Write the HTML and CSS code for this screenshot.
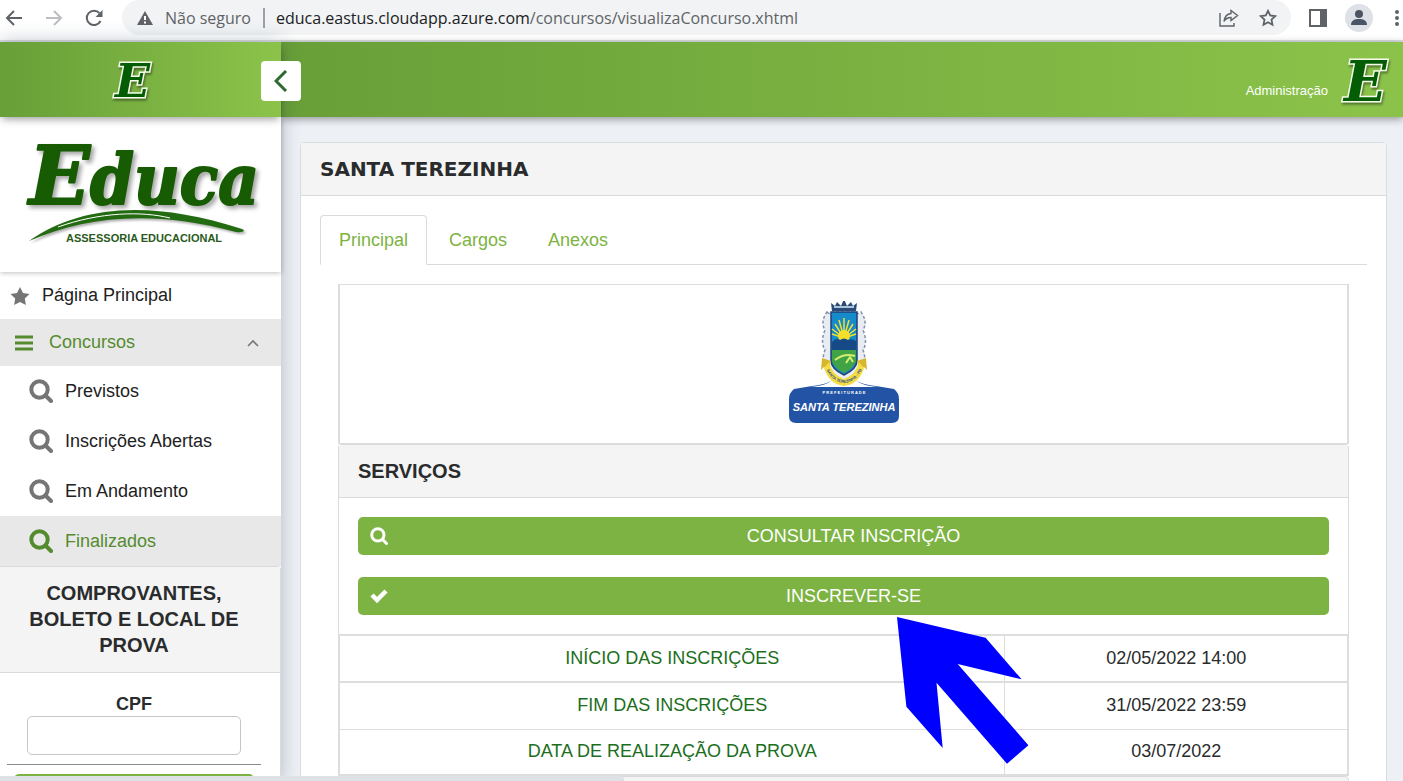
FILE: index.html
```html
<!DOCTYPE html>
<html lang="pt-BR">
<head>
  <meta charset="UTF-8">
  <meta name="viewport" content="width=device-width, initial-scale=1.0">
  <title>Educa - Concursos</title>
  <link rel="stylesheet" href="styles.css">
</head>
<body>
  <svg class="defs" aria-hidden="true">
    <symbol id="search" viewBox="0 0 24 24">
      <circle cx="10.5" cy="10.5" r="8.2" fill="none" stroke="currentColor" stroke-width="4"/>
      <path d="M16.5 16.5L22 22" stroke="currentColor" stroke-width="4" stroke-linecap="round"/>
    </symbol>
  </svg>

  <!-- browser bar -->
  <div class="browser">
    <button class="nav-btn" aria-label="Voltar">
      <svg width="18" height="18" viewBox="0 0 18 18" fill="none" stroke="#5f6368" stroke-width="2"><path d="M17 9H2M9 2L2 9l7 7"/></svg>
    </button>
    <button class="nav-btn" aria-label="Avançar">
      <svg width="18" height="18" viewBox="0 0 18 18" fill="none" stroke="#bcbec1" stroke-width="2"><path d="M1 9h15M9 2l7 7-7 7"/></svg>
    </button>
    <button class="nav-btn" aria-label="Recarregar">
      <svg width="18" height="18" viewBox="0 0 18 18" fill="none"><path d="M15.5 12A7.2 7.2 0 1 1 14.5 4.2" stroke="#5f6368" stroke-width="2"/><path d="M17.5 1v7h-7z" fill="#5f6368"/></svg>
    </button>
    <div class="address">
      <svg width="16" height="14" viewBox="0 0 16 14"><path d="M8 0l8 14H0z" fill="#5f6368"/><path d="M8 5v4M8 10.5v2" stroke="#fff" stroke-width="2"/></svg>
      <span class="insecure">Não seguro</span>
      <span class="url">educa.eastus.cloudapp.azure.com<span class="path">/concursos/visualizaConcurso.xhtml</span></span>
      <button class="nav-btn" aria-label="Compartilhar">
        <svg width="20" height="18" viewBox="0 0 20 18" fill="none" stroke="#5f6368" stroke-width="1.4"><path d="M1 4v13h14v-3"/><path d="M12 1.5l6.5 5L12 11.500V8.500C8.500 8.500 6.500 9.500 5 12.500 5.500 8 8 5 12 4.500z"/></svg>
      </button>
      <button class="nav-btn" aria-label="Favoritos">
        <svg width="18" height="18" viewBox="0 0 18 18" fill="none" stroke="#5f6368" stroke-width="1.800"><path d="M9 1.800l2.200 4.700 5.100.6-3.800 3.500 1 5.100L9 13.200l-4.500 2.500 1-5.100L1.700 7.100l5.100-.6z"/></svg>
      </button>
    </div>
    <button class="nav-btn" aria-label="Painel lateral">
      <svg width="18" height="18" viewBox="0 0 18 18"><path d="M1 1h16v16H1z" fill="#fff" stroke="#5f6368" stroke-width="2"/><path d="M11 0h7v18h-7z" fill="#5f6368"/></svg>
    </button>
    <button class="nav-btn" aria-label="Perfil">
      <svg width="28" height="28" viewBox="0 0 28 28"><circle cx="14" cy="14" r="14" fill="#dee1e6"/><circle cx="14" cy="10" r="4" fill="#4a5465"/><path d="M6 21c0-5 4-6 8-6s8 1 8 6z" fill="#4a5465"/></svg>
    </button>
    <button class="nav-btn" aria-label="Menu">
      <svg width="4" height="18" viewBox="0 0 4 18" fill="#5f6368"><circle cx="2" cy="3" r="2"/><circle cx="2" cy="9" r="2"/><circle cx="2" cy="15" r="2"/></svg>
    </button>
  </div>

  <div class="layout">
    <aside class="sidebar">
      <div class="sidebar-top">
        <svg class="mark" width="44" height="40" viewBox="0 0 44 40"><text x="4" y="37">E</text></svg>
        <button class="toggle" aria-label="Recolher menu">
          <svg width="14" height="22" viewBox="0 0 14 22" fill="none" stroke="#2c6b2f" stroke-width="3"><path d="M12 1L2 11l10 10"/></svg>
        </button>
      </div>

      <div class="brand">
        <svg width="250" height="120" viewBox="0 0 250 120">
          <g class="brand-name">
            <text x="9" y="70"><tspan class="brand-initial">E</tspan>duca</text>
          </g>
          <path class="swoosh" d="M9 107C60 72 128 65 222 95 227 97 221 99 216 98 130 75 65 83 9 107z"/>
          <path d="M38 93C80 78 122 77 150 84" fill="none" stroke="#fff" stroke-width="1"/>
          <text class="tagline" x="46" y="108">ASSESSORIA EDUCACIONAL</text>
        </svg>
      </div>

      <nav>
        <ul class="menu">
          <li><a href="#">
            <svg width="20" height="18" viewBox="0 0 20 18"><path d="M10 0l3 6 6.500 1-4.700 4.500 1.100 6.500L10 15l-5.900 3 1.100-6.500L.5 7 7 6z" fill="currentColor"/></svg>
            <span>Página Principal</span></a></li>
          <li><a href="#" class="group active">
            <svg width="18" height="16" viewBox="0 0 18 16" stroke="currentColor" stroke-width="3"><path d="M0 2h18M0 8h18M0 14h18"/></svg>
            <span>Concursos</span>
            <svg class="caret" width="12" height="8" viewBox="0 0 12 8" fill="none" stroke="#777" stroke-width="1.600"><path d="M1 7l5-5 5 5"/></svg></a>
            <ul class="submenu">
              <li><a href="#"><svg width="24" height="24"><use href="#search"/></svg><span>Previstos</span></a></li>
              <li><a href="#"><svg width="24" height="24"><use href="#search"/></svg><span>Inscrições Abertas</span></a></li>
              <li><a href="#"><svg width="24" height="24"><use href="#search"/></svg><span>Em Andamento</span></a></li>
              <li><a href="#" class="active"><svg width="24" height="24"><use href="#search"/></svg><span>Finalizados</span></a></li>
            </ul>
          </li>
        </ul>
      </nav>

      <form class="receipts">
        <h2>COMPROVANTES, BOLETO E LOCAL DE PROVA</h2>
        <div class="receipts-body">
          <label for="cpf">CPF</label>
          <input type="text" id="cpf">
          <hr>
          <button type="button" class="btn" aria-label="Consultar"></button>
        </div>
      </form>
    </aside>

    <div class="page">
      <header class="topbar">
        <a href="#">Administração</a>
        <svg class="mark big" width="48" height="50" viewBox="0 0 48 50"><text x="4" y="46">E</text></svg>
      </header>

      <main>
        <section class="card">
          <h1>SANTA TEREZINHA</h1>
          <div class="card-body">
            <ul class="tabs">
              <li><a href="#" class="current">Principal</a></li>
              <li><a href="#">Cargos</a></li>
              <li><a href="#">Anexos</a></li>
            </ul>

            <div class="tab-content">
              <div class="crest">
                <svg width="112" height="126" viewBox="0 3 112 126">
                  <path d="M24 88Q42 86 45 81H67Q70 86 88 88L106 91Q111 95 111 101V118Q111 125 104 125H8Q1 125 1 118V101Q1 95 6 91z" fill="#2253a5"/>
                  <path d="M22 89Q42 87 44 81H68Q70 87 90 89z" fill="#fff"/>
                  <path d="M39 14Q42 17 45 14H67Q70 17 73 14 80 24 75 32 80 44 75 52 79 62 74 70L56 87 38 70Q33 62 37 52 32 44 37 32 32 24 39 14z" fill="#e9edf3" stroke="#8291ad" stroke-width="1.500" stroke-dasharray="3 2"/>
                  <path d="M43 14h26v48q0 9-13 15-13-6-13-15z" fill="#168bcb" stroke="#214277" stroke-width="1.500"/>
                  <g stroke="#f4df30" stroke-width="1.500"><path d="M56 40V20M56 40l-5-18M56 40l5-18M56 40l-9-14M56 40l9-14M56 40l-12-9M56 40l12-9M56 40l-12-4M56 40l12-4"/></g>
                  <circle cx="56" cy="38" r="6" fill="#f6df28"/>
                  <path d="M44 44q4-5 8-2 4-3 8 0 4-2 8 1v9H44z" fill="#164a86"/>
                  <path d="M44 52h24v11q-2 7-12 12-10-5-12-12z" fill="#40a447"/>
                  <path d="M47 62q9-7 20-4M58 65l4-6 3 5" stroke="#d6ed70" stroke-width="2" fill="none"/>
                  <path d="M44 13l-1-8 4 3 2-4 4 4 3-7 3 7 4-4 2 4 4-3-1 8z" fill="#2b4a78"/>
                  <path d="M46 9h20" stroke="#a9c6dc" stroke-width="2"/>
                  <path d="M34 60l9 3-2 7-5-1-3 3zM78 60l-9 3 2 7 5-1 3 3z" fill="#d7b62d"/>
                  <path d="M41 64Q44 77 56 81 68 77 71 64L76 70Q71 86 56 88 41 86 36 70z" fill="#f4dc42"/>
                  <path id="ribbon" d="M38 71Q44 84 56 85 68 84 75 70" fill="none"/>
                  <text class="ribbon-text"><textPath href="#ribbon" startOffset="1">SANTA TEREZINHA - PB</textPath></text>
                  <text class="crest-small" x="56" y="96">P R E F E I T U R A  D E</text>
                  <text class="crest-name" x="56" y="113">SANTA TEREZINHA</text>
                </svg>
              </div>

              <section class="services">
                <h2>SERVIÇOS</h2>
                <div class="services-body">
                  <button type="button" class="btn"><svg width="18" height="18"><use href="#search"/></svg>CONSULTAR INSCRIÇÃO</button>
                  <div class="pointed">
                    <button type="button" class="btn"><svg width="18" height="18" viewBox="0 0 18 18" fill="none" stroke="currentColor" stroke-width="4.500"><path d="M2 8l5 5 9-9"/></svg>INSCREVER-SE</button>
                    <svg class="arrow" width="132" height="148" viewBox="0 0 132 148"><path d="M0 0L88.600 20.700 124.600 62.300 60.700 47 131.400 128.300 110 146.700 39.500 65.700 45.700 131 9.400 89.700z" fill="#00f"/></svg>
                  </div>
                </div>
              </section>

              <table class="dates">
                <tr><th scope="row">INÍCIO DAS INSCRIÇÕES</th><td>02/05/2022 14:00</td></tr>
                <tr><th scope="row">FIM DAS INSCRIÇÕES</th><td>31/05/2022 23:59</td></tr>
                <tr><th scope="row">DATA DE REALIZAÇÃO DA PROVA</th><td>03/07/2022</td></tr>
              </table>
              <div class="next-panel"></div>
            </div>
          </div>
        </section>
      </main>
    </div>
  </div>
  <div class="status"></div>
</body>
</html>
```
FILE: styles.css
```css
* {
  box-sizing: border-box;
}

body {
  margin: 0;
  height: 100vh;
  overflow: hidden;
  display: flex;
  flex-direction: column;
  font-family: "Liberation Sans", Arial, sans-serif;
  font-size: 18px;
  color: #292b2c;
  background: #edf0f5;
}

button {
  font-family: inherit;
  cursor: pointer;
}

a {
  text-decoration: none;
}

ul {
  list-style: none;
  margin: 0;
  padding: 0;
}

svg {
  display: block;
  flex: none;
}

.defs {
  position: absolute;
  width: 0;
  height: 0;
}

/* Browser bar */
.browser {
  flex: none;
  display: flex;
  align-items: center;
  gap: 22px;
  height: 42px;
  padding: 0 4px 5px 5px;
  background: #fff;
  border-bottom: 2px solid #dcdfe2;
  font-family: "Open Sans", "Noto Sans", sans-serif;
  font-size: 16px;
}

.nav-btn {
  flex: none;
  padding: 0;
  border: 0;
  background: none;
}

.address {
  flex: 1;
  display: flex;
  align-items: center;
  height: 35px;
  padding: 0 14px 0 15px;
  margin: 0 -4px 0 -3px;
  border-radius: 18px;
  background: #f1f3f4;
}

.address .nav-btn {
  margin-left: 20px;
}

.insecure {
  margin-left: 12px;
  padding-right: 12px;
  border-right: 2px solid #9aa0a6;
  line-height: 20px;
  color: #5f6368;
}

.url {
  flex: 1;
  margin-left: 11px;
  color: #202124;
  white-space: nowrap;
}

.path {
  color: #5f6368;
}

.browser > .nav-btn:nth-last-child(2) {
  margin: 0 0 0 -4px;
}

/* Layout */
.layout {
  flex: 1;
  display: flex;
  min-height: 0;
}

.sidebar {
  position: relative;
  z-index: 2;
  flex: none;
  width: 281px;
  background: #fff;
  box-shadow: 0 0 18px rgba(40, 60, 90, 0.3);
}

.sidebar-top,
.topbar {
  height: 75px;
  display: flex;
  align-items: center;
  background: linear-gradient(to right, #689f38, #8bc34a);
}

.sidebar-top {
  position: relative;
  z-index: 1;
  justify-content: center;
  padding-right: 16px;
  box-shadow: 0 4px 8px -2px rgba(0, 0, 0, 0.4);
}

.mark {
  overflow: visible;
}

.mark text {
  font: italic bold 46px "DejaVu Serif", serif;
  fill: #045c04;
  stroke: #f4fbe9;
  stroke-width: 3px;
  paint-order: stroke;
  filter: drop-shadow(1px 2px 1px rgba(0, 0, 0, 0.4));
}

.mark.big text {
  font-size: 56px;
}

.toggle {
  position: absolute;
  right: -20px;
  top: 19px;
  display: flex;
  align-items: center;
  justify-content: center;
  width: 40px;
  height: 40px;
  padding: 0;
  border: 0;
  border-radius: 4px;
  background: #fff;
}

.brand {
  height: 155px;
  padding: 17px 0 0 20px;
  box-shadow: 0 1px 5px rgba(0, 0, 0, 0.25);
}

.brand svg {
  overflow: visible;
}

.brand-name {
  font: italic bold 70px "DejaVu Serif Condensed", "DejaVu Serif", serif;
  fill: #175c02;
  stroke: #175c02;
  stroke-width: 2px;
  stroke-linejoin: round;
  filter: drop-shadow(3px 3px 2px rgba(0, 0, 0, 0.35));
}

.brand-initial {
  font-family: "DejaVu Serif", serif;
  font-size: 80px;
}

.swoosh {
  fill: #236b10;
  filter: drop-shadow(2px 2px 1px rgba(0, 0, 0, 0.3));
}

.tagline {
  font: bold 11px "Liberation Sans", sans-serif;
  fill: #2a5a1c;
}

/* Menu */
.menu a {
  display: flex;
  align-items: center;
  height: 47px;
  padding-left: 10px;
  color: #212121;
}

.menu a > svg {
  color: #757575;
}

.menu a span {
  margin-left: 12px;
}

.menu a.group {
  padding: 0 22px 0 15px;
}

.menu a.group span {
  margin-left: 16px;
}

.caret {
  margin-left: auto;
}

.menu .submenu a {
  height: 50px;
  padding-left: 29px;
}

.menu a.active,
.menu a.active > svg {
  color: #558b2f;
}

.menu a.active {
  background: #e8e8e8;
}

/* Receipts form */
.receipts {
  border: 1px solid #d9dadb;
  border-left: 0;
  border-radius: 0 4px 0 0;
  text-align: center;
}

.receipts h2 {
  margin: 0;
  padding: 13px 24px 14px 12px;
  border-bottom: 1px solid #d9dadb;
  background: #f4f4f4;
  font-size: 20px;
  line-height: 26px;
}

.receipts-body {
  padding: 19px 19px 10px 7px;
  font-weight: bold;
}

.receipts-body label {
  display: block;
  line-height: 24px;
}

.receipts-body input {
  display: block;
  width: 214px;
  height: 39px;
  margin: 0 auto;
  padding: 8px;
  border: 1px solid #c4c6c8;
  border-radius: 5px;
  font-size: 18px;
}

.receipts-body hr {
  height: 1px;
  margin: 9px 0;
  border: 0;
  background: #8b8b8b;
}

.receipts-body .btn {
  width: 240px;
  margin: 0 auto;
}

/* Top bar */
.page {
  flex: 1;
  min-width: 0;
}

.topbar {
  justify-content: flex-end;
  gap: 12px;
  padding-right: 15px;
  box-shadow: 0 2px 8px rgba(0, 0, 0, 0.4);
}

.topbar a {
  margin-top: 22px;
  color: #fff;
  font-size: 13px;
}

/* Main card */
main {
  padding: 25px 16px 0 19px;
}

.card {
  border: 1px solid #d9dce0;
  border-radius: 4px;
  background: #fff;
}

.card h1,
.services h2 {
  margin: 0;
  padding: 0 19px;
  border-bottom: 1px solid #d9dadb;
  background: #f4f4f4;
  font-size: 20px;
  line-height: 52px;
}

.card h1 {
  font-family: Verdana, "DejaVu Sans", sans-serif;
}

.card-body {
  padding: 19px;
}

.tabs {
  display: flex;
  gap: 3px;
  border-bottom: 1px solid #d9dadb;
}

.tabs a {
  display: block;
  padding: 0 18px;
  margin-bottom: -1px;
  border: 1px solid transparent;
  border-radius: 4px 4px 0 0;
  color: #7cb342;
  line-height: 48px;
}

.tabs a.current {
  border-color: #d9dadb;
  border-bottom-color: #fff;
}

.tab-content {
  padding: 19px 18px;
}

.crest {
  display: flex;
  align-items: center;
  justify-content: center;
  height: 160px;
  border: 2px solid #dcdddd;
  border-width: 1px 2px;
}

.ribbon-text {
  font: bold 4px "Liberation Sans", sans-serif;
  fill: #32558c;
}

.crest-small {
  font: bold 4px "Liberation Sans", sans-serif;
  fill: #fff;
  text-anchor: middle;
}

.crest-name {
  font: italic bold 11px "Liberation Sans", sans-serif;
  fill: #fff;
  text-anchor: middle;
}

/* Services */
.services {
  border: 1px solid #d9dadb;
  border-bottom: 0;
  border-radius: 4px 4px 0 0;
}

.services-body {
  display: flex;
  flex-direction: column;
  gap: 22px;
  padding: 19px;
}

.btn {
  position: relative;
  display: block;
  width: 100%;
  height: 38px;
  padding: 0 10px 0 30px;
  border: 0;
  border-radius: 5px;
  background: #7cb342;
  color: #fff;
  font-size: 18px;
}

.btn svg {
  position: absolute;
  left: 12px;
  top: 10px;
}

.pointed {
  position: relative;
}

.arrow {
  position: absolute;
  z-index: 1;
  left: calc(50% + 53px);
  top: calc(100% + 2px);
}

/* Dates */
.dates {
  width: 100%;
  border-collapse: collapse;
  border: 2px solid #dcdddd;
  text-align: center;
}

.dates th,
.dates td {
  height: 47px;
  padding: 0;
  border: 1px solid #dcdddd;
  font-weight: normal;
}

.dates tr:first-child > * {
  border-bottom-width: 2px;
}

.dates tr:last-child > * {
  height: 46px;
}

.dates th {
  width: 66%;
  color: #1b6e1b;
}

.next-panel {
  height: 54px;
  border: 1px solid #d9dadb;
  border-radius: 4px;
  background: #f4f4f4;
}

/* Link status at the bottom of the window */
.status {
  position: absolute;
  z-index: 3;
  left: 0;
  bottom: 0;
  width: 624px;
  height: 5px;
  border-radius: 0 4px 0 0;
  background: #dee1e6;
}
```
